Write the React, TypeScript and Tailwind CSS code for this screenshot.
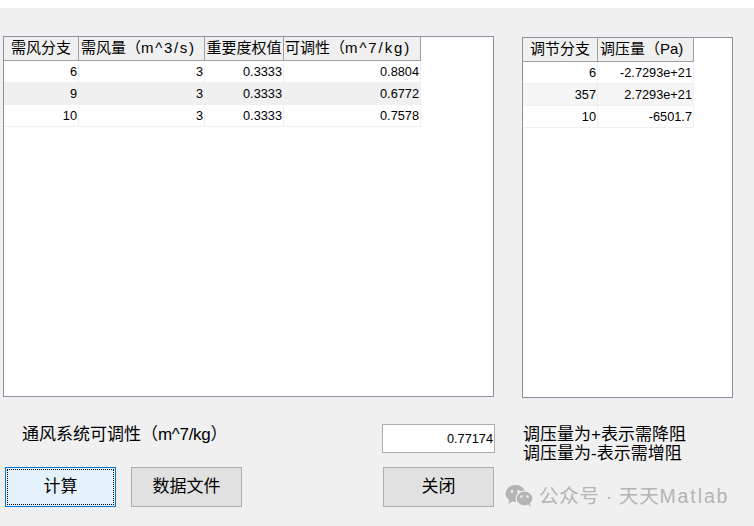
const cjk = "font-['Liberation_Sans','Noto_Sans_CJK_SC',sans-serif]";

interface Column {
  title: string;
  unit?: string;
  unitClass?: string;
  width: string;
  align: string;
}

const flowColumns: Column[] = [
  { title: "需风分支", width: "w-[75px]", align: "justify-center" },
  { title: "需风量（", unit: "m^3/s)", unitClass: "tracking-[1.7px]", width: "w-[126px]", align: "justify-start pl-[2px]" },
  { title: "重要度权值", width: "w-[79px]", align: "justify-center" },
  { title: "可调性（", unit: "m^7/kg)", unitClass: "tracking-[1.9px]", width: "w-[137px]", align: "justify-start pl-[1px]" },
];

const flowRows = [
  ["6", "3", "0.3333", "0.8804"],
  ["9", "3", "0.3333", "0.6772"],
  ["10", "3", "0.3333", "0.7578"],
];

const pressureColumns: Column[] = [
  { title: "调节分支", width: "w-[75px]", align: "justify-center" },
  { title: "调压量（", unit: "Pa)", unitClass: "tracking-normal", width: "w-[96px]", align: "justify-start pl-[2px]" },
];

const pressureRows = [
  ["6", "-2.7293e+21"],
  ["357", "2.7293e+21"],
  ["10", "-6501.7"],
];

function DataTable({
  columns,
  rows,
  stripe,
  className,
}: {
  columns: Column[];
  rows: string[][];
  stripe: string;
  className: string;
}) {
  return (
    <div className={`border border-[#8f8f9d] bg-white ${className}`}>
      <div className="flex h-6 w-fit border-b border-[#a0a0a0] bg-[#f0f0f0]">
        {columns.map((c) => (
          <div
            key={c.title}
            className={`${c.width} ${c.align} flex items-center whitespace-nowrap border-r border-[#a0a0a0] text-[15px] text-black`}
          >
            {c.title}
            {c.unit && <span className={c.unitClass}>{c.unit}</span>}
          </div>
        ))}
      </div>
      {rows.map((row, i) => (
        <div
          key={i}
          className={`flex h-[22px] w-fit border-b border-[#f0f0f0] ${i === 1 ? stripe : "bg-white"}`}
        >
          {row.map((cell, j) => (
            <div
              key={j}
              className={`${columns[j].width} flex items-center justify-end border-r border-[#f0f0f0] pr-px text-[12.75px] text-black`}
            >
              {cell}
            </div>
          ))}
        </div>
      ))}
    </div>
  );
}

function Button({ label, active }: { label: string; active?: boolean }) {
  if (active) {
    return (
      <button className="h-10 w-[111px] border border-[#0078d7] bg-[#e5f1fb] p-px text-[17px] text-black">
        <span className="flex h-full w-full items-center justify-center border border-dotted border-black">
          {label}
        </span>
      </button>
    );
  }
  return (
    <button className="flex h-10 w-[111px] items-center justify-center border border-[#adadad] bg-[#e1e1e1] text-[17px] text-black">
      {label}
    </button>
  );
}

export default function App() {
  return (
    <div className={`${cjk} relative h-[526px] w-[754px] overflow-hidden bg-white pt-2`}>
      <div className="h-[518px] bg-[#f0f0f0] pl-[3px] pt-7">
        <div className="flex items-start">
          <DataTable
            columns={flowColumns}
            rows={flowRows}
            stripe="bg-[#f0f0f0]"
            className="h-[361px] w-[491px]"
          />
          <DataTable
            columns={pressureColumns}
            rows={pressureRows}
            stripe="bg-[#f5f5f5]"
            className="ml-7 mt-px h-[361px] w-[211px]"
          />
        </div>

        <div className="mt-[26px] flex items-start">
          <div className="w-[379px] pl-[19px] pt-px text-[17px] leading-5 text-black">
            通风系统可调性（<span className="tracking-[-0.3px]">m^7/kg</span>）
          </div>
          <div className="flex h-[29px] w-[113px] items-center justify-end border border-[#adadad] bg-white pr-px text-[12.75px] text-black">
            0.77174
          </div>
          <div className="ml-[28px] pt-px text-[17px] leading-[19px] text-black">
            <div>调压量为+表示需降阻</div>
            <div>调压量为-表示需增阻</div>
          </div>
        </div>

        <div className="mt-1 flex pl-0.5">
          <Button label="计算" active />
          <div className="ml-[15px]">
            <Button label="数据文件" />
          </div>
          <div className="ml-[141px]">
            <Button label="关闭" />
          </div>
        </div>
      </div>

      <div className="absolute left-[505px] top-[484px] flex items-center gap-[6px] whitespace-nowrap text-[19.5px] leading-6 tracking-[0.7px] text-[#b4b4b4]">
        <svg width="28" height="22" viewBox="0 0 28 22" fill="#b4b4b4">
          <ellipse cx="10.5" cy="8.5" rx="10" ry="8.5" />
          <path d="M4 14 L3.5 19 L9 15.5 Z" />
          <ellipse cx="19.5" cy="13.5" rx="8.5" ry="7.5" stroke="#f0f0f0" strokeWidth="1.2" />
          <path d="M23 19 L25.5 22 L25 17 Z" />
          <circle cx="7" cy="6.5" r="1.4" fill="#f0f0f0" />
          <circle cx="13.5" cy="6.5" r="1.4" fill="#f0f0f0" />
          <circle cx="16.5" cy="11.5" r="1.2" fill="#f0f0f0" />
          <circle cx="22.5" cy="11.5" r="1.2" fill="#f0f0f0" />
        </svg>
        <span>
          公众号 · 天天<span className="tracking-[1.9px]">Matlab</span>
        </span>
      </div>
    </div>
  );
}
